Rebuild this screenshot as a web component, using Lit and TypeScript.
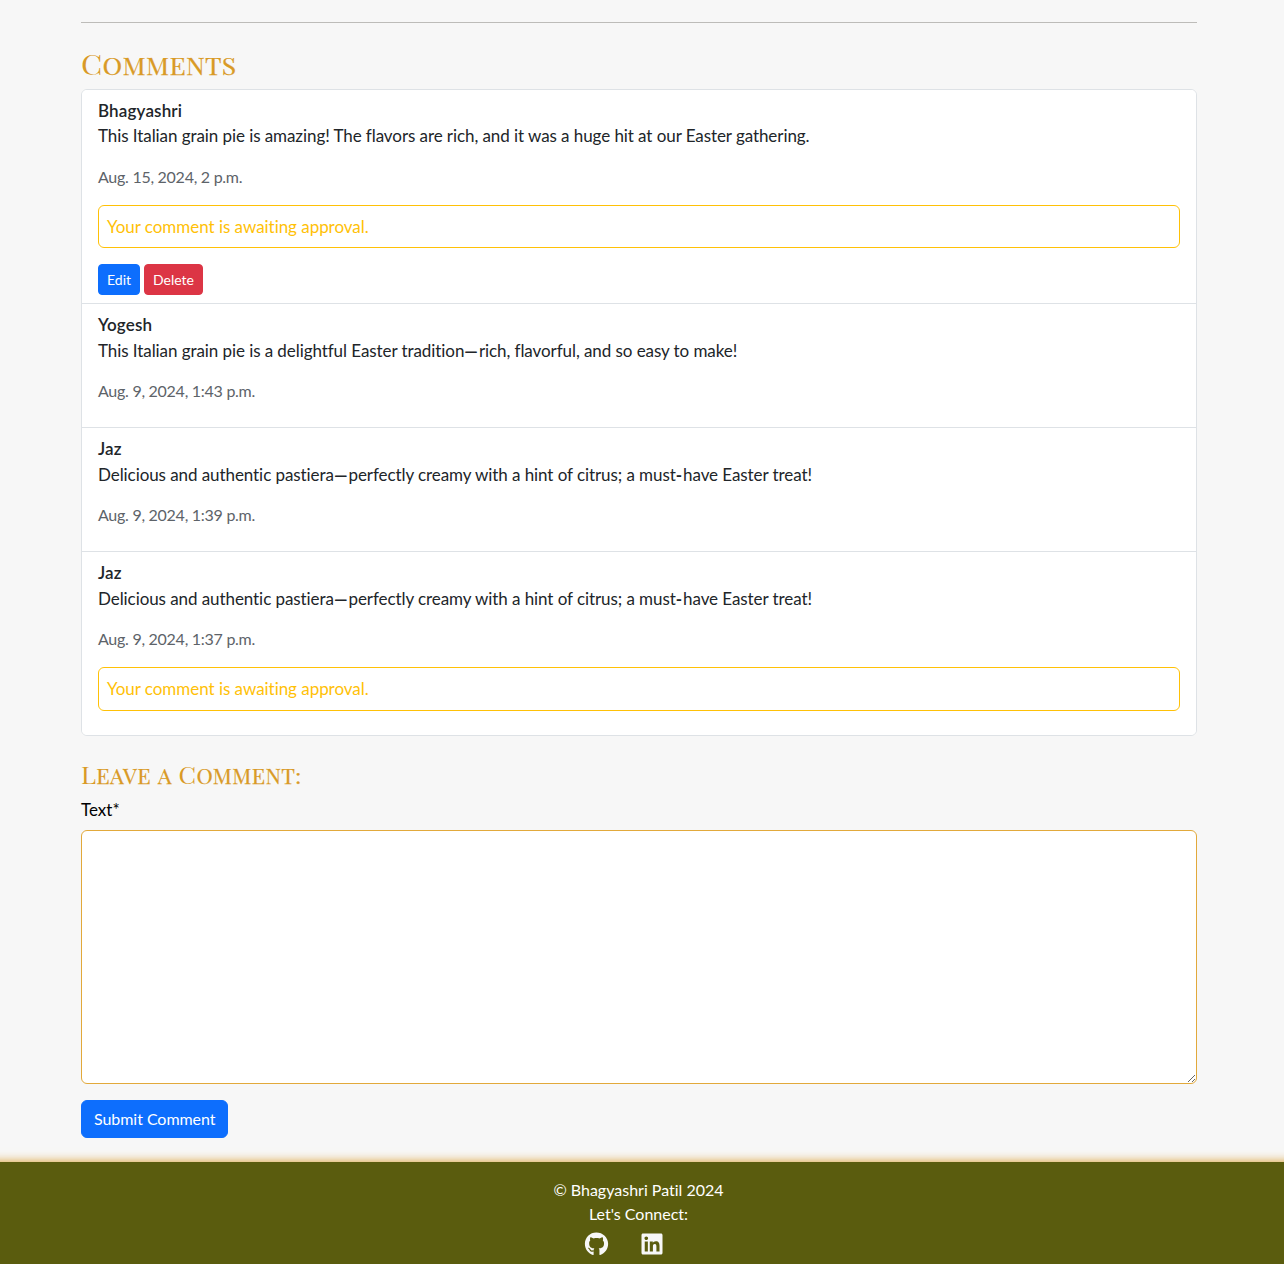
import { LitElement, html, css, nothing } from "lit";
import { customElement, property } from "lit/decorators.js";

interface Comment {
  author: string;
  body: string;
  date: string;
  pending?: boolean;
  own?: boolean;
}

const COMMENTS: Comment[] = [
  {
    author: "Bhagyashri",
    body: "This Italian grain pie is amazing! The flavors are rich, and it was a huge hit at our Easter gathering.",
    date: "Aug. 15, 2024, 2 p.m.",
    pending: true,
    own: true,
  },
  {
    author: "Yogesh",
    body: "This Italian grain pie is a delightful Easter tradition—rich, flavorful, and so easy to make!",
    date: "Aug. 9, 2024, 1:43 p.m.",
  },
  {
    author: "Jaz",
    body: "Delicious and authentic pastiera—perfectly creamy with a hint of citrus; a must-have Easter treat!",
    date: "Aug. 9, 2024, 1:39 p.m.",
  },
  {
    author: "Jaz",
    body: "Delicious and authentic pastiera—perfectly creamy with a hint of citrus; a must-have Easter treat!",
    date: "Aug. 9, 2024, 1:37 p.m.",
    pending: true,
  },
];

// Dashes and hyphens are drawn heavier than the words around them.
const withDashes = (text: string) =>
  text.split(/([—-])/).map((part) =>
    part === "—" || part === "-" ? html`<span class="dash">${part}</span>` : part
  );

@customElement("comment-item")
class CommentItem extends LitElement {
  @property({ attribute: false }) comment!: Comment;

  static styles = css`
    :host { display: block; padding: 8px 16px; background: #fff; }
    .author, .body { font-size: 17px; line-height: 25.5px; margin: 0; }
    .author { font-weight: 600; letter-spacing: 0.15px; }
    .body { margin-bottom: 16px; letter-spacing: -0.073px; }
    .dash { font-weight: 700; line-height: 1; letter-spacing: 1px; }
    .date { font-size: 16px; line-height: 24px; margin: 0 0 16px; color: #5d6369; letter-spacing: -0.27px; }
    .pending {
      font-size: 17px; line-height: 25.5px; margin: 0 0 16px; padding: 8px;
      border: 1px solid #ffc107; border-radius: 6px; color: #ffc107; letter-spacing: -0.04px;
    }
    .actions { display: flex; gap: 4px; }
    .btn {
      font: 14px/21px Lato, sans-serif; padding: 4px 8px; border: 1px solid;
      border-radius: 4px; color: #fff;
    }
    .edit { background: #0d6efd; border-color: #0d6efd; }
    .delete { background: #dc3545; border-color: #dc3545; }
  `;

  render() {
    const c = this.comment;
    return html`
      <div class="author">${c.author}</div>
      <p class="body">${withDashes(c.body)}</p>
      <p class="date">${c.date}</p>
      ${c.pending ? html`<p class="pending">Your comment is awaiting approval.</p>` : nothing}
      ${c.own
        ? html`<div class="actions"><button class="btn edit">Edit</button><button class="btn delete">Delete</button></div>`
        : nothing}
    `;
  }
}

// Small capitals: each word keeps a full-size initial, the rest is drawn as smaller capitals.
const smallCaps = (text: string) =>
  text.split(" ").map((word, i) => {
    const initial = /[A-Z]/.test(word[0]) ? word[0] : "";
    return html`${i ? " " : ""}${initial}<span class="small">${word.slice(initial.length)}</span>`;
  });

@customElement("app-root")
class AppRoot extends LitElement {
  static styles = css`
    :host {
      display: flex; flex-direction: column; box-sizing: border-box; height: 1264px; overflow: hidden;
      background: #f7f7f7; color: #212529; font: 17px/25.5px Lato, sans-serif;
      font-variant-ligatures: none;
    }
    .content { flex: none; box-sizing: border-box; height: 1162px; padding: 22px 87px 0 81px; }
    .rule { height: 1px; background: #bdbcb9; }
    .title {
      margin: 0; color: #d99a26; font-family: "Playfair Display SC", "Playfair Display", "Liberation Serif", serif;
      font-weight: 400; white-space: nowrap; letter-spacing: 0.3px; transform-origin: 0 0;
    }
    .small { font-size: 0.86em; line-height: 1; text-transform: uppercase; -webkit-text-stroke: 0.25px #d99a26; }
    .title-lg { font-size: 28.5px; line-height: 34px; padding-top: 23px; margin-bottom: 8.6px; transform: scaleX(1.085); }
    .title-md { font-size: 24px; line-height: 29px; padding-top: 24px; margin-bottom: 9.4px; transform: scaleX(1.065); }
    .list {
      border: 1px solid #dee2e6; border-radius: 6px; overflow: hidden; background: #fff;
    }
    .item + .item { border-top: 1px solid #dee2e6; }
    .label { display: block; color: #000; margin-bottom: 8px; line-height: 24px; }
    .input {
      display: block; box-sizing: border-box; width: 100%; height: 254px; border: 1px solid #e2a93b;
      border-radius: 6px; background: #fff; padding: 6px 12px; resize: vertical;
    }
    .submit {
      display: block; margin-top: 16px; font: 16px/24px Lato, sans-serif; height: 38px;
      padding: 6px 12px; border: 1px solid #0d6efd; border-radius: 6px; background: #0d6efd; color: #fff;
      white-space: nowrap; letter-spacing: -0.05px;
    }
    .footer {
      flex: 1; background: #5a5c0e; color: #fff; box-shadow: 0 0 10px #d99a26; margin: 0 -12px;
      padding: 16px 7px 0 0; text-align: center; font-size: 16px; line-height: 24px;
    }
    .line { margin: 0; }
    .social { display: flex; justify-content: center; gap: 32px; padding: 6px 31px 0 0; }
    .icon { display: block; height: 24px; fill: #f7f7f7; }
  `;

  render() {
    return html`
      <main class="content">
        <div class="rule"></div>
        <h3 class="title title-lg">${smallCaps("Comments")}</h3>
        <div class="list">
          ${COMMENTS.map((c) => html`<comment-item class="item" .comment=${c}></comment-item>`)}
        </div>
        <h4 class="title title-md">${smallCaps("Leave a Comment:")}</h4>
        <label class="label" for="text">Text*</label>
        <textarea class="input" id="text"></textarea>
        <button class="submit">Submit Comment</button>
      </main>
      <footer class="footer">
        <p class="line">© Bhagyashri Patil 2024</p>
        <p class="line">Let's Connect:</p>
        <div class="social">
          <svg class="icon" width="25" viewBox="0 0 496 512" role="img"><path d="M165.9 397.4c0 2-2.3 3.6-5.2 3.6-3.3.3-5.6-1.3-5.6-3.6 0-2 2.3-3.6 5.2-3.6 3-.3 5.6 1.3 5.6 3.6zm-31.1-4.5c-.7 2 1.3 4.3 4.3 4.9 2.6 1 5.6 0 6.2-2s-1.3-4.3-4.3-5.2c-2.6-.7-5.5.3-6.2 2.3zm44.2-1.7c-2.9.7-4.900 2.600-4.600 4.900.3 2 2.900 3.300 5.900 2.600 2.900-.7 4.900-2.600 4.600-4.600-.3-1.900-3-3.200-5.900-2.900zM244.800 8C106.100 8 0 113.300 0 252c0 110.900 69.800 205.800 169.500 239.200 12.800 2.300 17.300-5.600 17.300-12.100 0-6.200-.3-40.400-.3-61.400 0 0-70 15-84.700-29.800 0 0-11.400-29.100-27.800-36.600 0 0-22.900-15.700 1.600-15.400 0 0 24.900 2 38.600 25.800 21.900 38.600 58.600 27.500 72.900 20.900 2.300-16 8.800-27.100 16-33.700-55.900-6.200-112.300-14.300-112.300-110.500 0-27.500 7.600-41.300 23.600-58.900-2.600-6.500-11.100-33.300 2.600-67.900 20.900-6.500 69 27 69 27 20-5.600 41.500-8.500 62.800-8.500s42.800 2.900 62.800 8.500c0 0 48.100-33.600 69-27 13.700 34.700 5.200 61.400 2.600 67.900 16 17.700 25.800 31.500 25.800 58.900 0 96.500-58.900 104.200-114.800 110.500 9.200 7.900 17 22.900 17 46.400 0 33.700-.3 75.400-.3 83.600 0 6.500 4.600 14.400 17.300 12.100C428.200 457.800 496 362.900 496 252 496 113.300 383.500 8 244.800 8z"/></svg>
          <svg class="icon" width="22" viewBox="0 0 448 512" role="img"><path d="M416 32H31.900C14.300 32 0 46.500 0 64.300v383.400C0 465.500 14.300 480 31.900 480H416c17.600 0 32-14.500 32-32.300V64.300c0-17.800-14.400-32.300-32-32.300zM135.400 416H69V202.200h66.500V416zm-33.200-243c-21.300 0-38.500-17.300-38.500-38.500S80.900 96 102.200 96c21.200 0 38.500 17.300 38.500 38.500 0 21.300-17.200 38.500-38.500 38.500zm282.100 243h-66.400V312c0-24.800-.5-56.700-34.500-56.700-34.600 0-39.900 27-39.900 54.900V416h-66.400V202.200h63.700v29.200h.9c8.900-16.800 30.600-34.500 62.900-34.500 67.200 0 79.700 44.300 79.700 101.900V416z"/></svg>
        </div>
      </footer>
    `;
  }
}
